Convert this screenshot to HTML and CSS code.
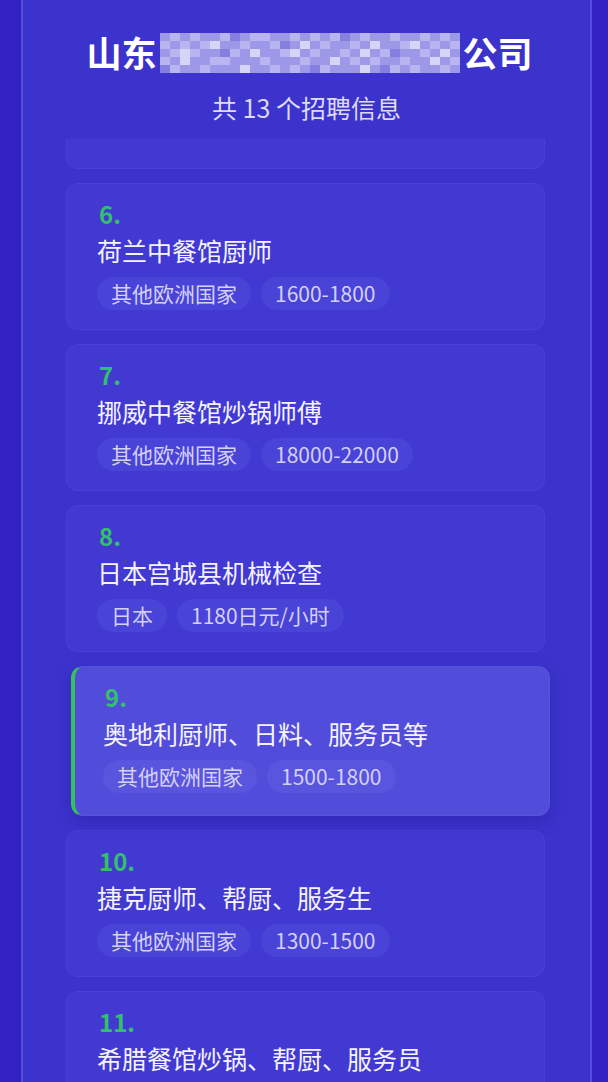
FILE: index.html
```html
<!DOCTYPE html>
<html lang="zh-CN">
<head>
<meta charset="utf-8">
<title>招聘信息</title>
<link rel="stylesheet" href="styles.css">
</head>
<body>
<div class="panel">
  <header class="head">
    <h1 class="title"><span>山东</span><svg class="mosaic" viewBox="0 0 300 40" width="302" height="40" aria-label="已打码">
      <rect x="0" y="0" width="300" height="40" fill="#9d98e7"/>
      <g fill="#b8b5f0">
        <rect x="10" y="0" width="10" height="8"/><rect x="30" y="0" width="10" height="8"/><rect x="60" y="0" width="10" height="8"/><rect x="90" y="0" width="10" height="8"/><rect x="100" y="0" width="10" height="8"/><rect x="130" y="0" width="10" height="8"/><rect x="150" y="0" width="10" height="8"/><rect x="170" y="0" width="10" height="8"/><rect x="200" y="0" width="10" height="8"/><rect x="230" y="0" width="10" height="8"/><rect x="260" y="0" width="10" height="8"/><rect x="280" y="0" width="10" height="8"/>
        <rect x="0" y="8" width="10" height="8"/><rect x="20" y="8" width="10" height="8"/><rect x="40" y="8" width="10" height="8"/><rect x="80" y="8" width="10" height="8"/><rect x="110" y="8" width="10" height="8"/><rect x="160" y="8" width="10" height="8"/><rect x="190" y="8" width="10" height="8"/><rect x="240" y="8" width="10" height="8"/><rect x="270" y="8" width="10" height="8"/><rect x="290" y="8" width="10" height="8"/>
        <rect x="10" y="16" width="10" height="8"/><rect x="30" y="16" width="10" height="8"/><rect x="70" y="16" width="10" height="8"/><rect x="120" y="16" width="10" height="8"/><rect x="150" y="16" width="10" height="8"/><rect x="180" y="16" width="10" height="8"/><rect x="220" y="16" width="10" height="8"/><rect x="260" y="16" width="10" height="8"/>
        <rect x="0" y="24" width="10" height="8"/><rect x="50" y="24" width="10" height="8"/><rect x="60" y="24" width="10" height="8"/><rect x="100" y="24" width="10" height="8"/><rect x="140" y="24" width="10" height="8"/><rect x="190" y="24" width="10" height="8"/><rect x="210" y="24" width="10" height="8"/><rect x="240" y="24" width="10" height="8"/><rect x="290" y="24" width="10" height="8"/>
        <rect x="10" y="32" width="10" height="8"/><rect x="40" y="32" width="10" height="8"/><rect x="110" y="32" width="10" height="8"/><rect x="130" y="32" width="10" height="8"/><rect x="160" y="32" width="10" height="8"/><rect x="230" y="32" width="10" height="8"/><rect x="250" y="32" width="10" height="8"/><rect x="280" y="32" width="10" height="8"/>
      </g>
      <g fill="#d6d4f7">
        <rect x="20" y="16" width="10" height="8"/><rect x="50" y="8" width="10" height="8"/><rect x="90" y="16" width="10" height="8"/><rect x="130" y="16" width="10" height="8"/><rect x="140" y="8" width="10" height="8"/><rect x="170" y="24" width="10" height="8"/><rect x="200" y="16" width="10" height="8"/><rect x="210" y="8" width="10" height="8"/><rect x="250" y="8" width="10" height="8"/><rect x="280" y="16" width="10" height="8"/><rect x="20" y="24" width="10" height="8"/><rect x="270" y="24" width="10" height="8"/><rect x="80" y="32" width="10" height="8"/><rect x="200" y="32" width="10" height="8"/>
      </g>
      <g fill="#857fdf">
        <rect x="0" y="32" width="10" height="8"/><rect x="70" y="0" width="10" height="8"/><rect x="120" y="8" width="10" height="8"/><rect x="180" y="0" width="10" height="8"/><rect x="230" y="16" width="10" height="8"/><rect x="60" y="16" width="10" height="8"/><rect x="150" y="32" width="10" height="8"/><rect x="220" y="32" width="10" height="8"/>
      </g>
    </svg><span>公司</span></h1>
    <p class="count">共 13 个招聘信息</p>
  </header>

  <div class="list">
    <div class="track">
      <div class="card card-hidden" aria-hidden="true"></div>

      <div class="card">
        <div class="num">6.</div>
        <div class="job">荷兰中餐馆厨师</div>
        <div class="tags"><span class="tag">其他欧洲国家</span><span class="tag">1600-1800</span></div>
      </div>

      <div class="card">
        <div class="num">7.</div>
        <div class="job">挪威中餐馆炒锅师傅</div>
        <div class="tags"><span class="tag">其他欧洲国家</span><span class="tag">18000-22000</span></div>
      </div>

      <div class="card">
        <div class="num">8.</div>
        <div class="job">日本宫城县机械检查</div>
        <div class="tags"><span class="tag">日本</span><span class="tag">1180日元/小时</span></div>
      </div>

      <div class="card card-active">
        <div class="num">9.</div>
        <div class="job">奥地利厨师、日料、服务员等</div>
        <div class="tags"><span class="tag">其他欧洲国家</span><span class="tag">1500-1800</span></div>
      </div>

      <div class="card">
        <div class="num">10.</div>
        <div class="job">捷克厨师、帮厨、服务生</div>
        <div class="tags"><span class="tag">其他欧洲国家</span><span class="tag">1300-1500</span></div>
      </div>

      <div class="card">
        <div class="num">11.</div>
        <div class="job">希腊餐馆炒锅、帮厨、服务员</div>
      </div>
    </div>
  </div>
</div>
</body>
</html>
```

FILE: styles.css
```css
* { box-sizing: border-box; }

html, body {
  margin: 0;
  padding: 0;
  height: 100%;
  overflow: hidden;
}

body {
  background: #3222c4;
  font-family: "Noto Sans CJK SC", "Noto Sans", sans-serif;
  color: #ffffff;
}

.panel {
  height: 1082px;
  margin: 0 16px 0 21px;
  background: #3c33cd;
  border-left: 2px solid #544ede;
  border-right: 2px solid #544ede;
  display: flex;
  flex-direction: column;
  overflow: hidden;
}

.head {
  padding-top: 30px;
  text-align: center;
  margin-bottom: 17px;
}

.title {
  margin: 0;
  font-size: 35px;
  line-height: 44px;
  font-weight: 700;
  color: #ffffff;
  display: flex;
  justify-content: center;
  align-items: center;
  padding-left: 6px;
}

.mosaic {
  display: block;
  margin: 2px 2px 0 2px;
}

.count {
  margin: 18px 0 0 0;
  font-size: 25px;
  line-height: 30px;
  color: #dcdaf6;
}

.list {
  flex: 1;
  overflow: hidden;
  padding: 0 45px 0 43px;
}

.track {
  margin-top: -117px;
  display: flex;
  flex-direction: column;
  gap: 14px;
}

.card {
  height: 147px;
  flex-shrink: 0;
  background: #4239d3;
  border: 1px solid rgba(255, 255, 255, 0.04);
  border-radius: 12px;
  padding: 15px 30px 0 30px;
}

.card-active {
  height: 150px;
  background: #524cdb;
  border-left: 4px solid #35c25e;
  padding-left: 28px;
  transform: translateX(5px);
  box-shadow: 0 6px 18px rgba(20, 10, 120, 0.25);
}

.num {
  font-size: 24px;
  line-height: 30px;
  font-weight: 700;
  color: #33c06a;
  padding-left: 2px;
}

.job {
  margin-top: 4px;
  font-size: 25px;
  line-height: 34px;
  color: #f4f3ff;
}

.tags {
  margin-top: 10px;
  display: flex;
  gap: 10px;
}

.tag {
  height: 33px;
  line-height: 33px;
  padding: 0 14px;
  border-radius: 17px;
  background: #4a43d8;
  font-size: 21px;
  color: #d3d1f6;
}

.card-active .tag {
  background: #5955df;
}
```
